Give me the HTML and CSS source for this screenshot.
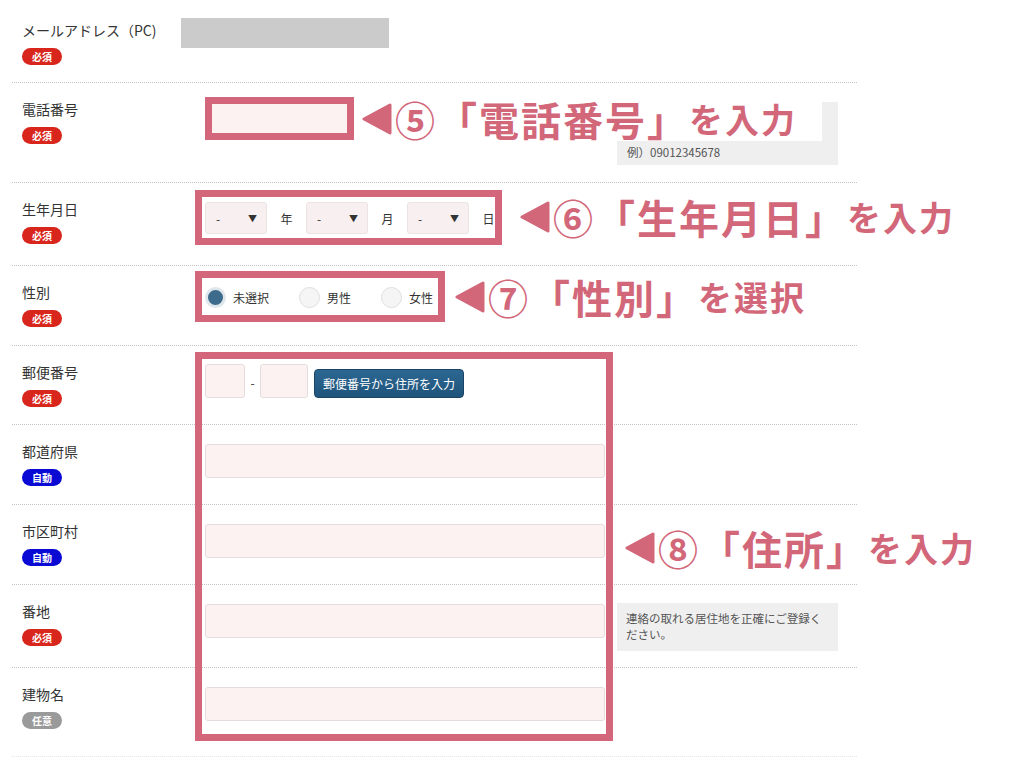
FILE: index.html
```html
<!DOCTYPE html>
<html lang="ja">
<head>
<meta charset="utf-8">
<title>会員情報入力</title>
<link rel="stylesheet" href="styles.css">
</head>
<body>
<div class="page">
  <div class="form">
    <div class="row r-mail">
      <div class="label"><div class="name">メールアドレス（PC)</div><span class="badge req">必須</span></div>
      <div class="field"><div class="masked"></div></div>
    </div>
    <div class="row r-tel">
      <div class="label"><div class="name">電話番号</div><span class="badge req">必須</span></div>
      <div class="field"><div class="input tel"></div></div>
      <div class="note tel-note">例）09012345678</div>
    </div>
    <div class="row r-birth">
      <div class="label"><div class="name">生年月日</div><span class="badge req">必須</span></div>
      <div class="field inline">
        <div class="select"><span>-</span><span class="arrow">▼</span></div><span class="unit">年</span>
        <div class="select"><span>-</span><span class="arrow">▼</span></div><span class="unit">月</span>
        <div class="select"><span>-</span><span class="arrow">▼</span></div><span class="unit">日</span>
      </div>
    </div>
    <div class="row r-sex">
      <div class="label"><div class="name">性別</div><span class="badge req">必須</span></div>
      <div class="field inline radios">
        <label class="radio"><span class="dot on"></span>未選択</label>
        <label class="radio"><span class="dot"></span>男性</label>
        <label class="radio"><span class="dot"></span>女性</label>
      </div>
    </div>
    <div class="row r-zip">
      <div class="label"><div class="name">郵便番号</div><span class="badge req">必須</span></div>
      <div class="field inline zip">
        <div class="input zip1"></div><span class="dash">-</span><div class="input zip2"></div>
        <button class="btn">郵便番号から住所を入力</button>
      </div>
    </div>
    <div class="row r-std">
      <div class="label"><div class="name">都道府県</div><span class="badge auto">自動</span></div>
      <div class="field"><div class="input wide"></div></div>
    </div>
    <div class="row r-std">
      <div class="label"><div class="name">市区町村</div><span class="badge auto">自動</span></div>
      <div class="field"><div class="input wide"></div></div>
    </div>
    <div class="row r-banchi">
      <div class="label"><div class="name">番地</div><span class="badge req">必須</span></div>
      <div class="field"><div class="input wide"></div></div>
      <div class="note addr-note">連絡の取れる居住地を正確にご登録ください。</div>
    </div>
    <div class="row r-last">
      <div class="label"><div class="name">建物名</div><span class="badge opt">任意</span></div>
      <div class="field"><div class="input wide"></div></div>
    </div>
  </div>

  <div class="frame f-tel"></div>
  <div class="frame f-birth"></div>
  <div class="frame f-sex"></div>
  <div class="frame f-addr"></div>

  <div class="callout c5">
    <svg class="tri" viewBox="0 0 30 32" width="30" height="32"><polygon points="28,2 28,30 2,16"/></svg>
    <span class="num">⑤</span><span class="big">「電話番号」</span><span class="small">を入力</span>
  </div>
  <div class="callout c6">
    <svg class="tri" viewBox="0 0 30 32" width="30" height="32"><polygon points="28,2 28,30 2,16"/></svg>
    <span class="num">⑥</span><span class="big">「生年月日」</span><span class="small">を入力</span>
  </div>
  <div class="callout c7">
    <svg class="tri" viewBox="0 0 30 32" width="30" height="32"><polygon points="28,2 28,30 2,16"/></svg>
    <span class="num">⑦</span><span class="big">「性別」</span><span class="small">を選択</span>
  </div>
  <div class="callout c8">
    <svg class="tri" viewBox="0 0 30 32" width="30" height="32"><polygon points="28,2 28,30 2,16"/></svg>
    <span class="num">⑧</span><span class="big">「住所」</span><span class="small">を入力</span>
  </div>
</div>
</body>
</html>
```

FILE: styles.css
```css
* { box-sizing: border-box; }
body {
  margin: 0;
  background: #fff;
  font-family: "Noto Sans CJK JP", "Noto Sans", sans-serif;
  color: #333;
}
.page {
  position: relative;
  width: 1024px;
  height: 764px;
  overflow: hidden;
}
.form {
  margin-left: 12px;
  width: 845px;
}
.row {
  display: flex;
  align-items: flex-start;
  padding-top: 17px;
  border-bottom: 1px dotted #c4c4c4;
}
.r-mail { height: 83px; padding-top: 21px; }
.r-tel { height: 100px; }
.r-birth { height: 83px; }
.r-sex { height: 80px; }
.r-zip { height: 79px; }
.r-std { height: 80px; }
.r-banchi { height: 83px; }
.r-last { height: 89px; border-bottom-color: #e6e6e6; }

.label {
  width: 193px;
  flex: 0 0 193px;
  padding-left: 10px;
}
.name {
  font-size: 14px;
  line-height: 18px;
  color: #333;
  white-space: nowrap;
}
.badge {
  display: inline-block;
  margin-top: 9px;
  width: 40px;
  height: 17px;
  border-radius: 9px;
  font-size: 10px;
  line-height: 17px;
  text-align: center;
  color: #fff;
  font-weight: 700;
}
.badge.req { background: #d8261d; }
.badge.auto { background: #0a0ad4; }
.badge.opt { background: #9a9a9a; }

.field { width: 400px; flex: 0 0 400px; }
.inline { display: flex; align-items: center; }

.masked {
  margin: -3px 0 0 -24px;
  width: 208px;
  height: 30px;
  background: #cbcbcb;
}
.input {
  height: 34px;
  background: #fcf2f2;
  border: 1px solid #e7dcdc;
  border-radius: 3px;
}
.input.tel { width: 145px; }
.input.wide { width: 400px; margin-top: 2px; }

.note {
  margin-left: 12px;
  width: 221px;
  background: #efefef;
  color: #555;
  font-size: 11.5px;
}
.tel-note {
  margin-top: 2px;
  height: 63px;
  padding: 42px 10px 0;
  line-height: 16px;
}
.addr-note {
  margin-top: 1px;
  height: 48px;
  padding: 7px 9px;
  line-height: 16px;
}

.r-birth .field { margin-top: 2px; }
.select {
  display: flex;
  justify-content: space-between;
  align-items: center;
  width: 62px;
  height: 32px;
  padding: 0 9px 0 10px;
  background: #f8f0f0;
  border: 1px solid #ece3e3;
  border-radius: 3px;
  font-size: 12px;
  color: #333;
}
.select .arrow { font-size: 9px; }
.unit {
  font-size: 12px;
  width: 39px;
  text-align: center;
}

.radios { margin-top: 4px; gap: 30px; }
.radio {
  display: flex;
  align-items: center;
  gap: 7px;
  font-size: 12px;
  color: #333;
}
.dot {
  width: 21px;
  height: 21px;
  border-radius: 50%;
  background: #f5f5f5;
  border: 1px solid #dedede;
}
.dot.on {
  background: #3d6b8b;
  border: 3px solid #dfe6ec;
}

.zip { align-items: flex-end; margin-top: 1px; }
.zip1 { width: 40px; }
.zip2 { width: 48px; }
.dash { width: 15px; text-align: center; font-size: 12px; line-height: 30px; }
.btn {
  margin-left: 6px;
  height: 29px;
  width: 150px;
  padding: 0;
  border: 1px solid #1b4567;
  border-radius: 4px;
  background: linear-gradient(#2c6792, #1f547b);
  color: #fff;
  font-family: inherit;
  font-size: 12px;
  line-height: 27px;
}

.frame {
  position: absolute;
  border: 7px solid #d3667a;
}
.f-tel { left: 205px; top: 97px; width: 149px; height: 43px; }
.f-birth { left: 195px; top: 190px; width: 307px; height: 55px; }
.f-sex { left: 195px; top: 271px; width: 250px; height: 51px; }
.f-addr { left: 195px; top: 352px; width: 418px; height: 389px; }

.callout {
  position: absolute;
  display: flex;
  align-items: center;
  height: 40px;
  color: #d3677a;
  font-weight: 700;
  line-height: 1;
  white-space: nowrap;
}
.tri {
  fill: currentColor;
  stroke: currentColor;
  stroke-width: 3;
  stroke-linejoin: round;
  margin-right: 3px;
}
.num, .big { font-size: 40px; letter-spacing: 2px; }
.small { font-size: 34px; letter-spacing: 2px; }
.c5 {
  left: 356px;
  top: 97px;
  height: 44px;
  padding: 0 25px 0 6px;
  background: #fff;
}
.c6 { left: 520px; top: 197px; }
.c7 { left: 455px; top: 277px; }
.c8 { left: 625px; top: 528px; }
```
